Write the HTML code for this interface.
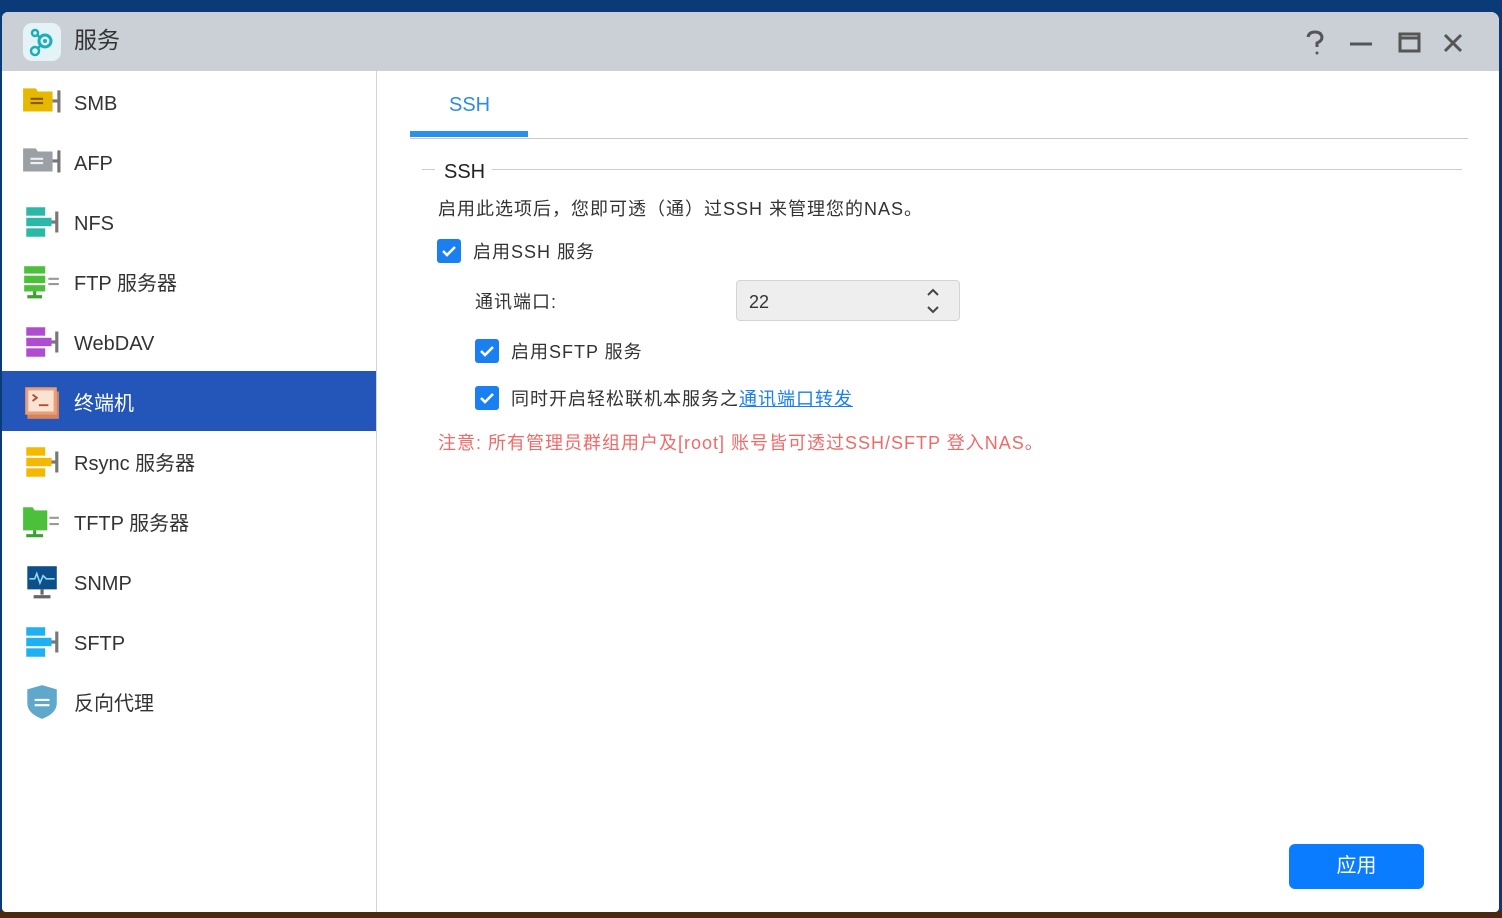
<!DOCTYPE html>
<html><head><meta charset="utf-8"><style>
*{margin:0;padding:0;box-sizing:border-box}
body{width:1502px;height:918px;overflow:hidden;background:#0a3a78;font-family:"Liberation Sans","Noto Sans CJK SC",sans-serif;position:relative}
.bot{position:absolute;left:0;top:910px;width:1502px;height:8px;background:#4a2a12}
.win{position:absolute;left:2px;top:12px;width:1497px;height:900px;background:#fff;border-radius:6px 8px 4px 4px;overflow:hidden}
.title{position:absolute;left:0;top:0;width:100%;height:59px;background:#cbd0d6}
.title .t{position:absolute;left:72px;top:14px;font-size:23px;line-height:28px;color:#333}
.logo{position:absolute;left:21px;top:11px;width:38px;height:38px;border-radius:9px;background:#e4f4f6}
.side{position:absolute;left:0;top:59px;width:375px;height:841px;border-right:1px solid #d4d4d4}
.it{position:absolute;left:0;width:374px;height:60px}
.it .tx{position:absolute;left:72px;top:21px;font-size:20px;line-height:24px;color:#333}
.it.a{background:#2356b8}.it.a .tx{color:#fff}
.ic{position:absolute;left:19px;top:13px;width:40px;height:36px}
.s{position:absolute;font-size:18px;line-height:24px;color:#333;white-space:nowrap}
.w{letter-spacing:1px}
.cb{position:absolute;width:24px;height:24px;background:#1a7ff0;border-radius:3px}
</style></head><body>
<div class="bot"></div>
<div class="win">
 <div class="title">
  <div class="logo"><svg width="38" height="38"><circle cx="22" cy="18" r="6" fill="none" stroke="#1aaeb9" stroke-width="3"/><circle cx="22" cy="18" r="2" fill="#1aaeb9"/><circle cx="12" cy="10" r="3" fill="none" stroke="#1aaeb9" stroke-width="2.5"/><circle cx="12" cy="28" r="4" fill="none" stroke="#1aaeb9" stroke-width="2.5"/><path d="M14 12l4 3M15 25l3-3" stroke="#1aaeb9" stroke-width="2.5"/></svg></div>
  <div class="t">服务</div>
  <svg style="position:absolute;left:1300px;top:17px" width="170" height="28" fill="none" stroke="#555" stroke-width="3"><path d="M6 8q1-5 7-5t7 5q0 4-5 6v4"/><circle cx="15" cy="24" r="1.5" fill="#555" stroke="none"/><path d="M48 15h22"/><rect x="98" y="5" width="19" height="17"/><path d="M98 9h19"/><path d="M143 6l16 16M159 6l-16 16"/></svg>
 </div>
 <div class="side">
  <div class="it" style="top:0"><svg class="ic" viewBox="0 0 38 34"><path d="M2 4h12l2 3h14v19H2z" fill="#e6b800"/><path d="M9 14h12M9 18h12" stroke="#8a5a00" stroke-width="2"/><path d="M30 16h5M36 6v21" stroke="#777" stroke-width="3"/></svg><div class="tx">SMB</div></div>
  <div class="it" style="top:60px"><svg class="ic" viewBox="0 0 38 34"><path d="M2 4h12l2 3h14v19H2z" fill="#9aa0a6"/><path d="M9 14h12M9 18h12" stroke="#eee" stroke-width="2"/><path d="M30 16h5M36 6v21" stroke="#777" stroke-width="3"/></svg><div class="tx">AFP</div></div>
  <div class="it" style="top:120px"><svg class="ic" viewBox="0 0 38 34"><rect x="5" y="3" width="18" height="8" fill="#2cb8a8"/><rect x="5" y="13" width="24" height="8" fill="#2cb8a8"/><rect x="5" y="23" width="18" height="8" fill="#2cb8a8"/><path d="M29 17h4M34 7v20" stroke="#777" stroke-width="3"/></svg><div class="tx">NFS</div></div>
  <div class="it" style="top:180px"><svg class="ic" viewBox="0 0 38 34"><rect x="3" y="2" width="20" height="7" fill="#4cc03a"/><rect x="3" y="11" width="20" height="7" fill="#4cc03a"/><rect x="3" y="20" width="20" height="6" fill="#4cc03a"/><path d="M13 26v4M6 31h14" stroke="#3aa030" stroke-width="3"/><path d="M26 14h10M26 19h10" stroke="#999" stroke-width="2"/></svg><div class="tx">FTP 服务器</div></div>
  <div class="it" style="top:240px"><svg class="ic" viewBox="0 0 38 34"><rect x="5" y="3" width="18" height="8" fill="#b04cd0"/><rect x="5" y="13" width="24" height="8" fill="#b04cd0"/><rect x="5" y="23" width="18" height="8" fill="#b04cd0"/><path d="M29 17h4M34 7v20" stroke="#777" stroke-width="3"/></svg><div class="tx">WebDAV</div></div>
  <div class="it a" style="top:300px"><svg class="ic" viewBox="0 0 38 34"><rect x="6" y="7" width="30" height="26" fill="#d9825a"/><rect x="4" y="3" width="30" height="26" fill="#e8a07a"/><rect x="7" y="6" width="24" height="20" fill="#fbe3d4"/><path d="M11 10l4 3-4 3M17 20h9" stroke="#b05030" stroke-width="1.8" fill="none"/></svg><div class="tx">终端机</div></div>
  <div class="it" style="top:360px"><svg class="ic" viewBox="0 0 38 34"><rect x="5" y="3" width="18" height="8" fill="#f5b800"/><rect x="5" y="13" width="24" height="8" fill="#f5b800"/><rect x="5" y="23" width="18" height="8" fill="#f5b800"/><path d="M29 17h4M34 7v20" stroke="#777" stroke-width="3"/></svg><div class="tx">Rsync 服务器</div></div>
  <div class="it" style="top:420px"><svg class="ic" viewBox="0 0 38 34"><path d="M2 3h9l2 3h12v19H2z" fill="#4cc03a"/><path d="M13 25v4M5 30h16" stroke="#3aa030" stroke-width="3"/><path d="M27 13h9M27 19h9" stroke="#999" stroke-width="2"/></svg><div class="tx">TFTP 服务器</div></div>
  <div class="it" style="top:480px"><svg class="ic" viewBox="0 0 38 34"><rect x="6" y="2" width="28" height="22" fill="#0d4f8a"/><path d="M8 14l5 0 2-5 3 9 3-7 3 3h8" stroke="#8fd8ff" stroke-width="1.5" fill="none"/><path d="M20 24v5M12 31h16" stroke="#666" stroke-width="3"/></svg><div class="tx">SNMP</div></div>
  <div class="it" style="top:540px"><svg class="ic" viewBox="0 0 38 34"><rect x="5" y="3" width="18" height="8" fill="#1eb0f0"/><rect x="5" y="13" width="24" height="8" fill="#1eb0f0"/><rect x="5" y="23" width="18" height="8" fill="#1eb0f0"/><path d="M29 17h4M34 7v20" stroke="#777" stroke-width="3"/></svg><div class="tx">SFTP</div></div>
  <div class="it" style="top:600px"><svg class="ic" viewBox="0 0 38 34"><path d="M20 1l14 4v13q0 10-14 15Q6 28 6 18V5z" fill="#5fa8cc"/><path d="M13 15h14M13 20h14" stroke="#fff" stroke-width="2"/></svg><div class="tx">反向代理</div></div>
 </div>
 <div class="s" style="left:447px;top:81px;font-size:20px;color:#2d8ce0">SSH</div>
 <div style="position:absolute;left:408px;top:126px;width:1058px;height:1px;background:#c8c8c8"></div>
 <div style="position:absolute;left:408px;top:119px;width:118px;height:6px;background:#2a90e8"></div>
 <div style="position:absolute;left:420px;top:157px;width:13px;height:1px;background:#ccc"></div>
 <div style="position:absolute;left:490px;top:157px;width:970px;height:1px;background:#ccc"></div>
 <div class="s" style="left:442px;top:148px;font-size:20px;color:#222">SSH</div>
 <div class="s w" style="left:436px;top:185px">启用此选项后，您即可透（通）过SSH 来管理您的NAS。</div>
 <div class="cb" style="left:435px;top:227px"><svg width="24" height="24"><path d="M6 12l4 4 8-8" stroke="#fff" stroke-width="2.6" fill="none"/></svg></div>
 <div class="s w" style="left:471px;top:228px">启用SSH 服务</div>
 <div class="s w" style="left:473px;top:278px">通讯端口:</div>
 <div style="position:absolute;left:734px;top:268px;width:224px;height:41px;background:#eeeeee;border:1px solid #d4d4d4;border-radius:4px"><div class="s" style="left:12px;top:9px">22</div><svg style="position:absolute;left:189px;top:5px" width="14" height="30" fill="none" stroke="#444" stroke-width="2"><path d="M2 9l5-5 5 5M2 21l5 5 5-5"/></svg></div>
 <div class="cb" style="left:473px;top:327px"><svg width="24" height="24"><path d="M6 12l4 4 8-8" stroke="#fff" stroke-width="2.6" fill="none"/></svg></div>
 <div class="s w" style="left:509px;top:328px">启用SFTP 服务</div>
 <div class="cb" style="left:473px;top:374px"><svg width="24" height="24"><path d="M6 12l4 4 8-8" stroke="#fff" stroke-width="2.6" fill="none"/></svg></div>
 <div class="s w" style="left:509px;top:375px">同时开启轻松联机本服务之<span style="color:#1a7ff0;text-decoration:underline">通讯端口转发</span></div>
 <div class="s w" style="left:436px;top:419px;color:#f06a6a">注意: 所有管理员群组用户及[root] 账号皆可透过SSH/SFTP 登入NAS。</div>
 <div style="position:absolute;left:1287px;top:832px;width:135px;height:45px;background:#0a7cff;border-radius:6px;color:#fff;font-size:20px;text-align:center;line-height:45px">应用</div>
</div>
</body></html>
